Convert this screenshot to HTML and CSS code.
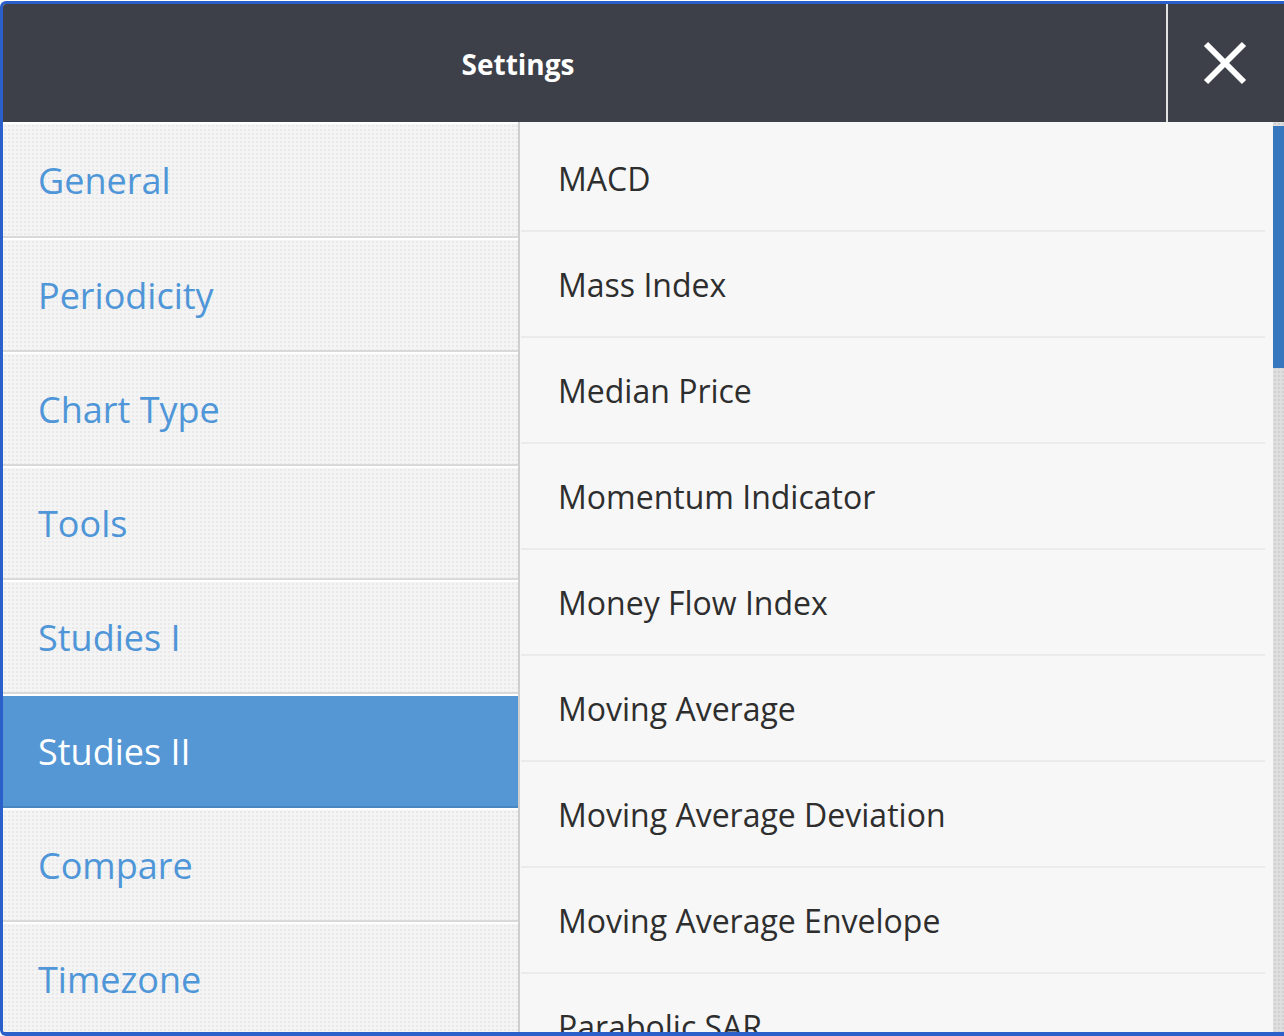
FILE: index.html
```html
<!DOCTYPE html>
<html lang="en">
<head>
    <meta charset="UTF-8">
    <meta name="viewport" content="width=device-width, initial-scale=1.0">
    <title>Settings</title>
    <link rel="stylesheet" href="styles.css">
</head>
<body>
    <div class="modal">
        <!-- Header -->
        <header class="modal-header">
            <h2 class="modal-title">Settings</h2>
            <button class="close-btn" aria-label="Close">
                <svg width="44" height="44" viewBox="0 0 44 44">
                    <line x1="3" y1="3" x2="41" y2="41" />
                    <line x1="41" y1="3" x2="3" y2="41" />
                </svg>
            </button>
        </header>

        <div class="modal-body">
            <!-- Side menu -->
            <nav class="side-menu">
                <a class="menu-item">General</a>
                <a class="menu-item">Periodicity</a>
                <a class="menu-item">Chart Type</a>
                <a class="menu-item">Tools</a>
                <a class="menu-item">Studies I</a>
                <a class="menu-item active">Studies II</a>
                <a class="menu-item">Compare</a>
                <a class="menu-item">Timezone</a>
            </nav>

            <!-- Studies list -->
            <div class="content">
                <ul class="study-list">
                    <li>MACD</li>
                    <li>Mass Index</li>
                    <li>Median Price</li>
                    <li>Momentum Indicator</li>
                    <li>Money Flow Index</li>
                    <li>Moving Average</li>
                    <li>Moving Average Deviation</li>
                    <li>Moving Average Envelope</li>
                    <li>Parabolic SAR</li>
                </ul>
                <div class="scrollbar"><div class="thumb"></div></div>
            </div>
        </div>
    </div>
</body>
</html>
```

FILE: styles.css
```css
/* Basic Styling */
html, body {
    margin: 0;
    height: 100%;
    overflow: hidden;
    background-color: #fff;
}

body {
    padding-top: 1px;
    box-sizing: border-box;
    font-family: "Open Sans", sans-serif;
}

.modal {
    display: flex;
    flex-direction: column;
    height: 1035px;
    box-sizing: border-box;
    border: 3px solid #2b5fc9;
    border-bottom-width: 4px;
    border-right: none;
    border-radius: 6px 0 0 6px;
    overflow: hidden;
}

/* Header */
.modal-header {
    display: flex;
    height: 118px;
    flex-shrink: 0;
    background-color: #3d4049;
}

.modal-title {
    flex: 1;
    margin: 0;
    padding-right: 133px;
    text-align: center;
    line-height: 120px;
    font-size: 28px;
    font-weight: 700;
    color: #fff;
}

.close-btn {
    width: 118px;
    padding: 0;
    background: none;
    border: none;
    border-left: 2px solid #e2e2e2;
    display: flex;
    align-items: center;
    justify-content: center;
    cursor: pointer;
}

.close-btn svg {
    margin-right: 3px;
}

.close-btn line {
    stroke: #fff;
    stroke-width: 6;
}

/* Body */
.modal-body {
    flex: 1;
    display: flex;
    min-height: 0;
}

.side-menu {
    width: 515px;
    flex-shrink: 0;
    border-right: 2px solid #cfcfcf;
    display: flex;
    flex-direction: column;
    overflow: hidden;
}

.menu-item {
    display: flex;
    align-items: center;
    flex-shrink: 0;
    height: 110px;
    padding-left: 35px;
    border-top: 2px solid #fff;
    border-bottom: 2px solid #d9d9d9;
    background-color: #f4f4f4;
    background-image: radial-gradient(#e8e8e8 0.7px, transparent 0.9px);
    background-size: 4px 4px;
    font-size: 36px;
    color: #4f96d8;
    cursor: pointer;
}

.menu-item:first-child {
    height: 112px;
}

.menu-item.active {
    background-color: #5597d5;
    background-image: none;
    border-bottom-color: #4a86c0;
    color: #fff;
}

/* Studies list */
.content {
    flex: 1;
    display: flex;
    background-color: #f7f7f7;
    padding-left: 1px;
    overflow: hidden;
}

.study-list {
    list-style: none;
    margin: 0;
    padding: 4px 0 0;
    width: 744px;
    flex-shrink: 0;
}

.study-list li {
    display: flex;
    align-items: center;
    height: 104px;
    padding-left: 37px;
    border-bottom: 2px solid #ebebeb;
    font-size: 32px;
    color: #2e2e2e;
    cursor: pointer;
}

.scrollbar {
    width: 12px;
    margin-left: 8px;
    background-color: #dedede;
    background-image: radial-gradient(#d0d0d0 0.7px, transparent 0.9px);
    background-size: 4px 4px;
}

.thumb {
    margin-top: 4px;
    height: 242px;
    background-color: #3677be;
}
```
